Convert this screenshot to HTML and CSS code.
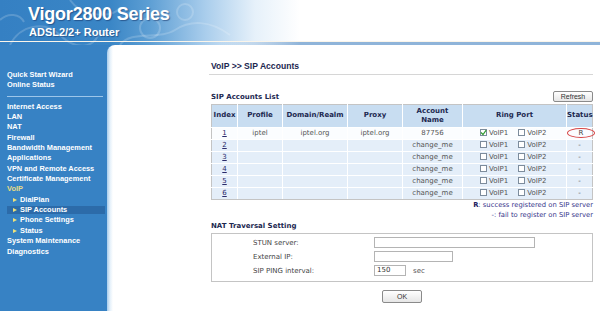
FILE: index.html
```html
<!DOCTYPE html>
<html>
<head>
<meta charset="utf-8">
<title>VoIP &gt;&gt; SIP Accounts</title>
<link rel="stylesheet" href="styles.css">
</head>
<body>
<div class="page">
  <header class="banner">
    <svg class="swirl" width="300" height="45" viewBox="0 0 300 45" aria-hidden="true">
      <g fill="none" stroke="#ffffff" stroke-opacity="0.18" stroke-width="2">
        <path d="M10 45 C 20 25, 45 20, 60 35 S 95 50, 100 30"/>
        <path d="M70 0 C 80 15, 110 20, 120 8"/>
        <circle cx="150" cy="28" r="10"/>
        <circle cx="185" cy="12" r="8"/>
        <path d="M120 45 C 130 30, 160 40, 175 30 S 210 20, 230 35"/>
        <path d="M0 20 C 8 12, 20 14, 24 22"/>
      </g>
    </svg>
    <div class="brand">
      <div class="brand-title">Vigor2800 Series</div>
      <div class="brand-sub">ADSL2/2+ Router</div>
    </div>
  </header>
  <div class="main">
    <nav class="side">
      <a class="nav">Quick Start Wizard</a>
      <a class="nav">Online Status</a>
      <div class="sep"></div>
      <a class="nav">Internet Access</a>
      <a class="nav">LAN</a>
      <a class="nav">NAT</a>
      <a class="nav">Firewall</a>
      <a class="nav">Bandwidth Management</a>
      <a class="nav">Applications</a>
      <a class="nav">VPN and Remote Access</a>
      <a class="nav">Certificate Management</a>
      <a class="nav nav-open">VoIP</a>
      <a class="nav sub">DialPlan</a>
      <a class="nav sub sub-active">SIP Accounts</a>
      <a class="nav sub">Phone Settings</a>
      <a class="nav sub">Status</a>
      <a class="nav">System Maintenance</a>
      <a class="nav">Diagnostics</a>
    </nav>
    <section class="content">
      <h1 class="title">VoIP &gt;&gt; SIP Accounts</h1>
      <div class="list-head">
        <span class="caption">SIP Accounts List</span>
        <button class="btn">Refresh</button>
      </div>
      <table class="grid">
        <colgroup>
          <col style="width:26px"><col style="width:45px"><col style="width:65px"><col style="width:55px"><col style="width:60px"><col style="width:104px"><col style="width:26px">
        </colgroup>
        <thead>
          <tr><th>Index</th><th>Profile</th><th>Domain/Realm</th><th>Proxy</th><th>Account<br>Name</th><th>Ring Port</th><th>Status</th></tr>
        </thead>
        <tbody>
          <tr class="first"><td><a class="idx">1</a></td><td>iptel</td><td>iptel.org</td><td>iptel.org</td><td>87756</td><td class="ports"><span class="cb checked"><svg width="7" height="7" viewBox="0 0 7 7"><path d="M1 3.5 L3 5.5 L6.2 1.2" fill="none" stroke="#2f9a2f" stroke-width="1.2"/></svg></span>VoIP1<span class="cb"></span>VoIP2</td><td><span class="reg">R</span></td></tr>
          <tr><td><a class="idx">2</a></td><td></td><td></td><td></td><td>change_me</td><td class="ports"><span class="cb"></span>VoIP1<span class="cb"></span>VoIP2</td><td>-</td></tr>
          <tr><td><a class="idx">3</a></td><td></td><td></td><td></td><td>change_me</td><td class="ports"><span class="cb"></span>VoIP1<span class="cb"></span>VoIP2</td><td>-</td></tr>
          <tr><td><a class="idx">4</a></td><td></td><td></td><td></td><td>change_me</td><td class="ports"><span class="cb"></span>VoIP1<span class="cb"></span>VoIP2</td><td>-</td></tr>
          <tr><td><a class="idx">5</a></td><td></td><td></td><td></td><td>change_me</td><td class="ports"><span class="cb"></span>VoIP1<span class="cb"></span>VoIP2</td><td>-</td></tr>
          <tr><td><a class="idx">6</a></td><td></td><td></td><td></td><td>change_me</td><td class="ports"><span class="cb"></span>VoIP1<span class="cb"></span>VoIP2</td><td>-</td></tr>
        </tbody>
      </table>
      <div class="legend">
        <div><b>R</b>: success registered on SIP server</div>
        <div>-: fail to register on SIP server</div>
      </div>
      <div class="caption nat-title">NAT Traversal Setting</div>
      <div class="nat">
        <div class="nat-row"><span class="lbl">STUN server:</span><span class="inp w-stun"></span></div>
        <div class="nat-row"><span class="lbl">External IP:</span><span class="inp w-ext"></span></div>
        <div class="nat-row"><span class="lbl">SIP PING interval:</span><span class="inp w-ping">150</span><span class="unit">sec</span></div>
      </div>
      <div class="actions"><button class="btn ok">OK</button></div>
    </section>
  </div>
</div>
</body>
</html>
```

FILE: styles.css
```css
html, body {
  margin: 0;
  padding: 0;
  background: #ffffff;
}

.page {
  width: 600px;
  height: 311px;
  overflow: hidden;
  display: flex;
  flex-direction: column;
  font-family: "DejaVu Sans", Verdana, sans-serif;
}

/* ---------- banner ---------- */
.banner {
  position: relative;
  height: 45px;
  flex: none;
  background: linear-gradient(90deg, #3580c3 0px, #3a86c6 110px, #5e9fd4 150px, #a9cdec 205px, #e6f1fa 255px, #ffffff 300px);
}
.banner::after {
  content: "";
  position: absolute;
  left: 0;
  right: 0;
  top: 41px;
  height: 3px;
  background: linear-gradient(90deg, rgba(143,180,217,0) 0px, rgba(143,180,217,0) 220px, #8fb4d9 300px);
  border-top: 1px solid #fbf5ea;
}
.swirl {
  position: absolute;
  left: 0;
  top: 0;
}
.brand {
  position: relative;
  padding: 5px 0 0 28px;
  font-family: "Liberation Sans", Arial, sans-serif;
  font-weight: bold;
  color: #ffffff;
  text-shadow: 1px 1px 1px rgba(20, 50, 100, 0.55);
}
.brand-title {
  font-size: 18px;
  line-height: 18px;
  letter-spacing: -0.2px;
}
.brand-sub {
  font-size: 11px;
  line-height: 11px;
  margin: 4px 0 0 1px;
}

/* ---------- main ---------- */
.main {
  flex: 1;
  display: flex;
  background: #3782c4;
}

.side {
  width: 107px;
  flex: none;
  box-sizing: border-box;
  padding: 25px 2px 0 7px;
  font-family: "Liberation Sans", Arial, sans-serif;
  font-weight: bold;
  font-size: 7.4px;
  line-height: 10.35px;
}
.nav {
  display: block;
  color: #ffffff;
  white-space: nowrap;
}
.sep {
  height: 1px;
  background: #9cc6ea;
  margin: 5px 2px 5px 0;
}
.nav-open {
  color: #e8dc86;
}
.sub {
  position: relative;
  padding-left: 13px;
}
.sub::before {
  content: "";
  position: absolute;
  left: 6px;
  top: 3px;
  border-left: 4px solid #f0e27a;
  border-top: 2.5px solid transparent;
  border-bottom: 2.5px solid transparent;
}
.sub-active {
  background: linear-gradient(180deg, transparent 1px, #2c6ba9 1px, #2c6ba9 9.35px, transparent 9.35px);
}

.content {
  flex: 1;
  background: linear-gradient(90deg, #a6cbeb 0px, #e4f0fa 3px, #ffffff 6px);
  border-top-left-radius: 8px;
  padding: 15px 7px 0 104px;
  color: #444444;
  font-size: 7px;
}

.title {
  margin: 0 0 0 -2px;
  padding: 0 0 2px 2px;
  font-family: "Liberation Sans", Arial, sans-serif;
  font-size: 8.6px;
  line-height: 12px;
  font-weight: bold;
  color: #1c2850;
  border-bottom: 1px solid #d6d6d6;
}

.list-head {
  display: flex;
  align-items: center;
  justify-content: space-between;
  margin-top: 16px;
  height: 11px;
}
.caption {
  font-weight: bold;
  font-size: 7px;
  color: #1c2850;
}

.btn {
  font-family: "Liberation Sans", Arial, sans-serif;
  font-size: 7px;
  color: #333333;
  height: 11px;
  width: 40px;
  padding: 0;
  border: 1px solid #8a8a8a;
  border-radius: 2px;
  background: linear-gradient(180deg, #ffffff, #e6e6e6);
  line-height: 9px;
}

.grid {
  margin-top: 2px;
  width: 381px;
  table-layout: fixed;
  border-collapse: collapse;
  border: 1px solid #c4c4c4;
}
.grid th {
  height: 21.5px;
  padding: 0;
  background: #c8ddf1;
  color: #1c2850;
  font-size: 7px;
  font-weight: bold;
  line-height: 9px;
  border: 1px solid #ffffff;
  border-top-color: #c4c4c4;
}
.grid td {
  height: 11px;
  padding: 0;
  text-align: center;
  font-size: 7px;
  line-height: 9px;
  color: #555555;
  background: #e4eef9;
  border: 1px solid #ffffff;
  white-space: nowrap;
}
.grid tr.first td {
  background: #fbfdff;
}
.grid td:first-child, .grid th:first-child { border-left-color: #c4c4c4; }
.grid td:last-child, .grid th:last-child { border-right-color: #c4c4c4; }
.grid tr:last-child td { border-bottom-color: #c4c4c4; }

.idx {
  color: #2a2a6a;
  text-decoration: underline;
}
.grid td.ports {
  text-align: left;
  padding-left: 17px;
}
.cb {
  display: inline-block;
  width: 7px;
  height: 7px;
  box-sizing: border-box;
  border: 1px solid #7d8c9c;
  background: #ffffff;
  vertical-align: -1px;
  margin-right: 2px;
  position: relative;
}
.ports .cb:nth-of-type(2) {
  margin-left: 10px;
}
.cb svg {
  position: absolute;
  left: -1px;
  top: -1px;
}
.reg {
  display: inline-block;
  width: 28px;
  height: 10px;
  line-height: 8px;
  box-sizing: border-box;
  border: 1px solid #d64545;
  border-radius: 50%;
  color: #444444;
  vertical-align: middle;
}

.legend {
  text-align: right;
  color: #35358a;
  font-size: 6.8px;
  line-height: 10px;
}
.legend b {
  color: #1c2060;
}

.nat-title {
  display: block;
  margin-top: 1px;
  line-height: 10px;
}
.nat {
  margin-top: 2px;
  border: 1px solid #c4c4c4;
  padding: 2px 0 3px 41px;
}
.nat-row {
  display: flex;
  align-items: center;
  height: 14px;
}
.lbl {
  width: 121px;
  flex: none;
  color: #444444;
}
.inp {
  display: block;
  height: 11px;
  box-sizing: border-box;
  border: 1px solid #b4b4b4;
  background: #ffffff;
  padding-left: 2px;
  line-height: 9px;
  color: #333333;
}
.w-stun { width: 161px; }
.w-ext { width: 79px; }
.w-ping { width: 32px; }
.unit {
  margin-left: 7px;
  color: #555555;
}

.actions {
  display: flex;
  justify-content: center;
  margin-top: 8px;
}
.ok {
  height: 13px;
  width: 40px;
  line-height: 11px;
}
```
